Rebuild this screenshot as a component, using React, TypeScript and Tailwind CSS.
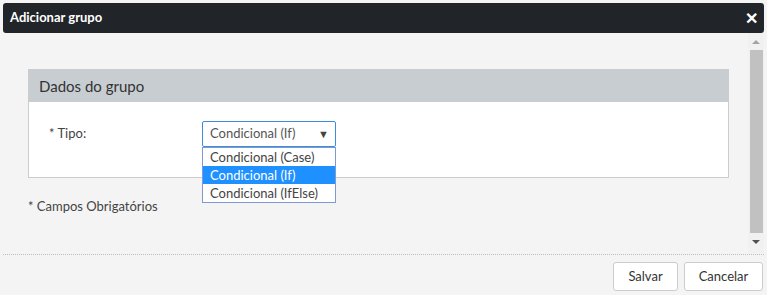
import React from "react";

const options = ["Condicional (Case)", "Condicional (If)", "Condicional (IfElse)"];

export default function App() {
  const selected = "Condicional (If)";

  return (
    <div className="w-[767px] h-[295px] bg-[#f4f4f4] overflow-hidden flex flex-col font-['Lato',sans-serif] text-[13px] text-[#333]">
      {/* Header */}
      <div className="mx-[3px] mt-[3px] h-[30px] bg-[#212529] rounded-[3px] flex items-center justify-between pl-[7px] pr-[6px] shrink-0">
        <span className="text-white font-bold text-[13px]">Adicionar grupo</span>
        <span className="text-white font-bold text-[16px] leading-none">✕</span>
      </div>

      {/* Body */}
      <div className="flex h-[220px] ml-[3px] mr-[3px]">
        <div className="flex-1 pl-[25px] pr-[19px] pt-[36px]">
          <div className="border border-[#cccccc] bg-white">
            <div className="h-[32px] bg-[#c8cdd2] flex items-center px-[10px] text-[15px] text-[#333]">
              Dados do grupo
            </div>
            <div className="h-[75px] flex items-start pt-[19px] pl-[20px]">
              <label className="w-[153px] h-[25px] flex items-center text-[#444]">* Tipo:</label>
              <div className="relative">
                <div className="w-[134px] h-[26px] border border-[#3c8dde] rounded-[2px] flex items-center justify-between pl-[7px] pr-[6px] text-[#555] bg-white">
                  <span>{selected}</span>
                  <span className="text-[11px] text-[#444]">▼</span>
                </div>
                <ul className="absolute left-0 top-[26px] w-[134px] border border-[#7d9bd1] bg-white z-10">
                  {options.map((o) => (
                    <li
                      key={o}
                      className={
                        o === selected
                          ? "h-[18px] leading-[18px] px-[7px] bg-[#1e90ff] text-white"
                          : "h-[18px] leading-[18px] px-[7px] text-[#444]"
                      }
                    >
                      {o}
                    </li>
                  ))}
                </ul>
              </div>
            </div>
          </div>
          <p className="mt-[19px] text-[#444]">* Campos Obrigatórios</p>
        </div>

        {/* Scrollbar */}
        <div className="w-[16px] flex flex-col items-center bg-[#f1f1f1] pt-[7px]">
          <span className="w-0 h-0 border-l-[4px] border-r-[4px] border-b-[4px] border-l-transparent border-r-transparent border-b-[#a3a3a3]"></span>
          <div className="w-[13px] h-[183px] bg-[#c1c1c1] mt-[6px]"></div>
          <span className="mt-[7px] w-0 h-0 border-l-[4px] border-r-[4px] border-t-[4px] border-l-transparent border-r-transparent border-t-[#505050]"></span>
        </div>
      </div>

      {/* Footer */}
      <div className="mx-[3px] border-t border-dotted border-[#bdbdbd] mt-[1px]"></div>
      <div className="flex justify-end gap-[6px] pr-[4px] pt-[7px]">
        <button className="h-[29px] w-[65px] bg-white border border-[#cccccc] rounded-[3px] text-[#333]">Salvar</button>
        <button className="h-[29px] w-[79px] bg-white border border-[#cccccc] rounded-[3px] text-[#333]">Cancelar</button>
      </div>
    </div>
  );
}
